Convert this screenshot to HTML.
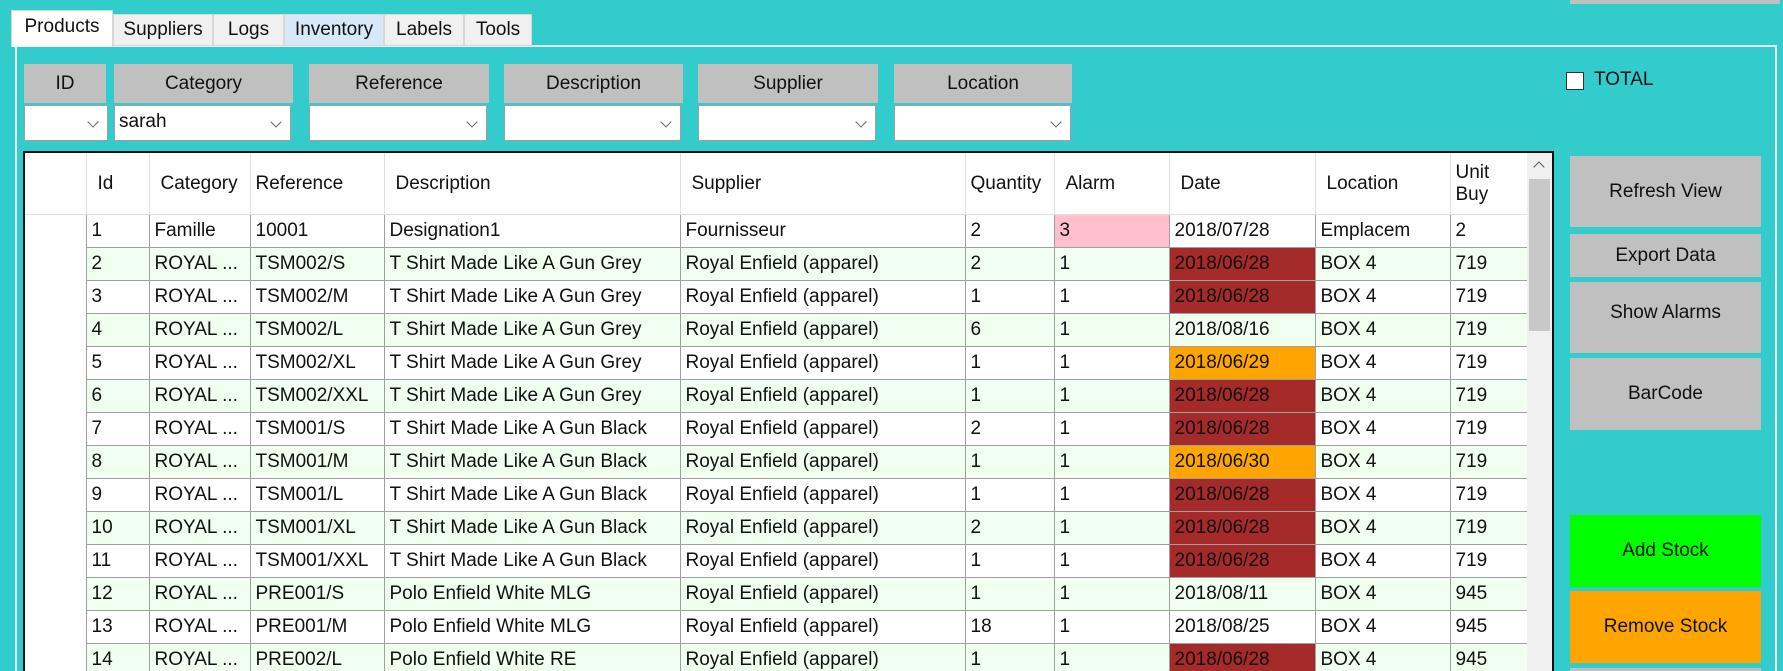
<!DOCTYPE html><html style="overflow:hidden;width:1783px;height:671px"><head><style>
body{margin:0;width:1783px;height:671px;overflow:hidden;background:#33CCCC;font-family:"Liberation Sans",sans-serif;position:relative;color:#111}
.a{position:absolute;box-sizing:border-box}
.tab{top:14px;height:32px;background:#f0f0f0;border:1px solid #d8d8d8;font-size:19px;text-align:center;line-height:30px}
.fh{top:64px;height:39px;background:#c0c0c0;font-size:19px;text-align:center;line-height:39px}
.cb{top:105px;height:36px;background:#fff;border:1px solid #a0a0a0;font-size:19px;line-height:32px;padding-left:4px}
.cb:after{content:"";position:absolute;right:10px;top:12px;width:7px;height:7px;border-right:1.3px solid #666;border-bottom:1.3px solid #666;transform:rotate(45deg)}
table{border-collapse:collapse;table-layout:fixed;font-size:19px}
td{border:1px solid #a0a0a0;height:32px;padding:0 0 0 5px;white-space:nowrap;overflow:hidden;line-height:32px;background:#fff}
th{border:1px solid #e0e0e0;border-top:none;height:59px;font-weight:normal;text-align:left;padding-left:11px;background:#fff;line-height:22px}
td.rh{border:none;background:#fff}
tr.g td{background:#F0FFF0}
tr.g td.rh{background:#fff}
td.r{background:#A52A2A!important}
td.o{background:#FFA500!important}
td.p{background:#FFC0CB!important}
.btn{left:1570px;width:191px;background:#c0c0c0;font-size:19px;text-align:center;display:flex;align-items:center;justify-content:center}
</style></head><body>
<div class="a" style="left:1570px;top:0;width:210px;height:4px;background:#c0c0c0"></div>
<div class="a" style="left:15px;top:45px;width:1762px;height:626px;border:2px solid #e8f8f8;border-bottom:none;border-right-color:#f0f0f0"></div>
<div class="a tab" style="left:11px;top:10px;height:37px;width:102px;background:#fff;border-bottom:none;line-height:32px">Products</div>
<div class="a tab" style="left:113px;width:100px">Suppliers</div>
<div class="a tab" style="left:213px;width:71px">Logs</div>
<div class="a tab" style="left:284px;width:100px;background:#d8e8f8">Inventory</div>
<div class="a tab" style="left:384px;width:80px">Labels</div>
<div class="a tab" style="left:464px;width:68px">Tools</div>

<div class="a fh" style="left:24px;width:82px">ID</div>
<div class="a fh" style="left:114px;width:179px">Category</div>
<div class="a fh" style="left:309px;width:180px">Reference</div>
<div class="a fh" style="left:504px;width:179px">Description</div>
<div class="a fh" style="left:698px;width:180px">Supplier</div>
<div class="a fh" style="left:894px;width:178px">Location</div>
<div class="a cb" style="left:24px;width:84px"></div>
<div class="a cb" style="left:114px;width:177px">sarah</div>
<div class="a cb" style="left:309px;width:178px"></div>
<div class="a cb" style="left:504px;width:177px"></div>
<div class="a cb" style="left:698px;width:178px"></div>
<div class="a cb" style="left:894px;width:177px"></div>

<div class="a" style="left:1566px;top:72px;width:18px;height:18px;background:#fff;border:1.5px solid #333"></div>
<div class="a" style="left:1594px;top:69px;font-size:19px;color:#111">TOTAL</div>

<div class="a" style="left:23px;top:151px;width:1531px;height:520px;border:2px solid #111;border-bottom:none;background:#fff;overflow:hidden">
<table style="width:1502px">
<colgroup><col style="width:61px"><col style="width:63px"><col style="width:101px"><col style="width:134px"><col style="width:296px"><col style="width:285px"><col style="width:89px"><col style="width:115px"><col style="width:146px"><col style="width:135px"><col style="width:77px"></colgroup>
<tr><th style="border-left:none"></th><th>Id</th><th>Category</th><th style="padding-left:5px">Reference</th><th>Description</th><th>Supplier</th><th style="padding-left:5px">Quantity</th><th>Alarm</th><th>Date</th><th>Location</th><th style="padding-left:5px">Unit<br>Buy</th></tr>
<tr><td class="rh"></td><td>1</td><td>Famille</td><td>10001</td><td>Designation1</td><td>Fournisseur</td><td>2</td><td class="p">3</td><td>2018/07/28</td><td>Emplacem</td><td>2</td></tr>
<tr class="g"><td class="rh"></td><td>2</td><td>ROYAL ...</td><td>TSM002/S</td><td>T Shirt Made Like A Gun Grey</td><td>Royal Enfield (apparel)</td><td>2</td><td>1</td><td class="r">2018/06/28</td><td>BOX 4</td><td>719</td></tr>
<tr><td class="rh"></td><td>3</td><td>ROYAL ...</td><td>TSM002/M</td><td>T Shirt Made Like A Gun Grey</td><td>Royal Enfield (apparel)</td><td>1</td><td>1</td><td class="r">2018/06/28</td><td>BOX 4</td><td>719</td></tr>
<tr class="g"><td class="rh"></td><td>4</td><td>ROYAL ...</td><td>TSM002/L</td><td>T Shirt Made Like A Gun Grey</td><td>Royal Enfield (apparel)</td><td>6</td><td>1</td><td>2018/08/16</td><td>BOX 4</td><td>719</td></tr>
<tr><td class="rh"></td><td>5</td><td>ROYAL ...</td><td>TSM002/XL</td><td>T Shirt Made Like A Gun Grey</td><td>Royal Enfield (apparel)</td><td>1</td><td>1</td><td class="o">2018/06/29</td><td>BOX 4</td><td>719</td></tr>
<tr class="g"><td class="rh"></td><td>6</td><td>ROYAL ...</td><td>TSM002/XXL</td><td>T Shirt Made Like A Gun Grey</td><td>Royal Enfield (apparel)</td><td>1</td><td>1</td><td class="r">2018/06/28</td><td>BOX 4</td><td>719</td></tr>
<tr><td class="rh"></td><td>7</td><td>ROYAL ...</td><td>TSM001/S</td><td>T Shirt Made Like A Gun Black</td><td>Royal Enfield (apparel)</td><td>2</td><td>1</td><td class="r">2018/06/28</td><td>BOX 4</td><td>719</td></tr>
<tr class="g"><td class="rh"></td><td>8</td><td>ROYAL ...</td><td>TSM001/M</td><td>T Shirt Made Like A Gun Black</td><td>Royal Enfield (apparel)</td><td>1</td><td>1</td><td class="o">2018/06/30</td><td>BOX 4</td><td>719</td></tr>
<tr><td class="rh"></td><td>9</td><td>ROYAL ...</td><td>TSM001/L</td><td>T Shirt Made Like A Gun Black</td><td>Royal Enfield (apparel)</td><td>1</td><td>1</td><td class="r">2018/06/28</td><td>BOX 4</td><td>719</td></tr>
<tr class="g"><td class="rh"></td><td>10</td><td>ROYAL ...</td><td>TSM001/XL</td><td>T Shirt Made Like A Gun Black</td><td>Royal Enfield (apparel)</td><td>2</td><td>1</td><td class="r">2018/06/28</td><td>BOX 4</td><td>719</td></tr>
<tr><td class="rh"></td><td>11</td><td>ROYAL ...</td><td>TSM001/XXL</td><td>T Shirt Made Like A Gun Black</td><td>Royal Enfield (apparel)</td><td>1</td><td>1</td><td class="r">2018/06/28</td><td>BOX 4</td><td>719</td></tr>
<tr class="g"><td class="rh"></td><td>12</td><td>ROYAL ...</td><td>PRE001/S</td><td>Polo Enfield White MLG</td><td>Royal Enfield (apparel)</td><td>1</td><td>1</td><td>2018/08/11</td><td>BOX 4</td><td>945</td></tr>
<tr><td class="rh"></td><td>13</td><td>ROYAL ...</td><td>PRE001/M</td><td>Polo Enfield White MLG</td><td>Royal Enfield (apparel)</td><td>18</td><td>1</td><td>2018/08/25</td><td>BOX 4</td><td>945</td></tr>
<tr class="g"><td class="rh"></td><td>14</td><td>ROYAL ...</td><td>PRE002/L</td><td>Polo Enfield White RE</td><td>Royal Enfield (apparel)</td><td>1</td><td>1</td><td class="r">2018/06/28</td><td>BOX 4</td><td>945</td></tr>
</table>
<div class="a" style="left:1502px;top:0;width:25px;height:520px;background:#f0f0f0"></div>
<div class="a" style="left:1504px;top:26px;width:21px;height:152px;background:#c8c8c8"></div>
<div class="a" style="left:1510px;top:10px;width:8px;height:8px;border-left:1.5px solid #555;border-top:1.5px solid #555;transform:rotate(45deg)"></div>
</div>

<div class="a btn" style="top:156px;height:71px">Refresh View</div>
<div class="a btn" style="top:234px;height:43px">Export Data</div>
<div class="a btn" style="top:282px;height:71px;padding-bottom:10px">Show Alarms</div>
<div class="a btn" style="top:358px;height:72px">BarCode</div>
<div class="a btn" style="top:515px;height:72px;background:#00FF00">Add Stock</div>
<div class="a btn" style="top:591px;height:72px;background:#FFA500">Remove Stock</div>
<div class="a btn" style="top:668px;height:3px"></div>
</body></html>
